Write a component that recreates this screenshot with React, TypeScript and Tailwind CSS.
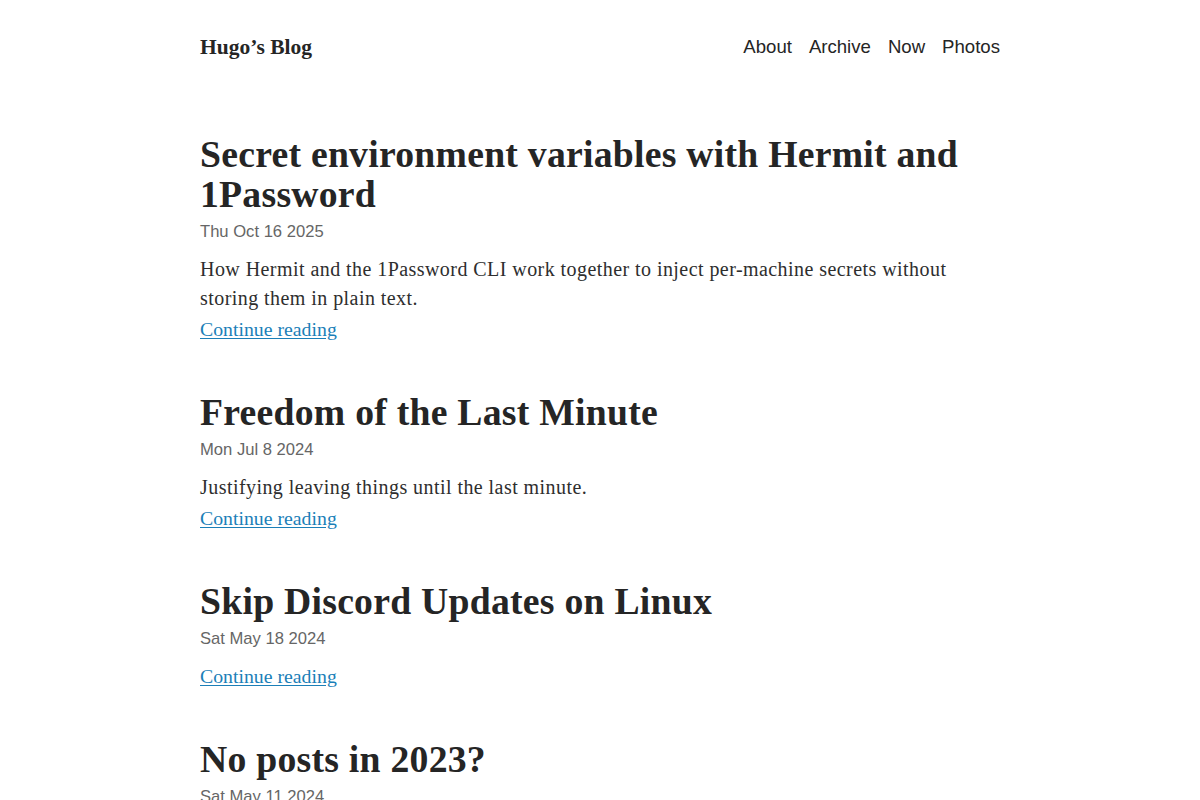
import React from "react";

type Post = {
  title: string;
  date: string;
  summary: string;
};

const posts: Post[] = [
  {
    title: "Secret environment variables with Hermit and 1Password",
    date: "Thu Oct 16 2025",
    summary:
      "How Hermit and the 1Password CLI work together to inject per-machine secrets without storing them in plain text.",
  },
  {
    title: "Freedom of the Last Minute",
    date: "Mon Jul 8 2024",
    summary: "Justifying leaving things until the last minute.",
  },
  {
    title: "Skip Discord Updates on Linux",
    date: "Sat May 18 2024",
    summary: "",
  },
  {
    title: "No posts in 2023?",
    date: "Sat May 11 2024",
    summary: "",
  },
];

const serif = "font-['Liberation_Serif','DejaVu_Serif',serif]";
const sans = "font-['Liberation_Sans','Roboto',sans-serif]";

export default function App() {
  return (
    <div className="min-h-screen bg-white text-[#222]">
      <div className="mx-auto w-[800px] pt-[31px]">
        <header className="flex items-center justify-between h-[32px]">
          <a href="#" className={`${serif} text-[21.5px] font-bold text-[#252525]`}>
            Hugo’s Blog
          </a>
          <nav className={`${sans} flex gap-[17px] text-[18.6px] text-[#252525]`}>
            <a href="#">About</a>
            <a href="#">Archive</a>
            <a href="#">Now</a>
            <a href="#">Photos</a>
          </nav>
        </header>

        <main className="mt-[71px] flex flex-col gap-[48px]">
          {posts.map((post) => (
            <article key={post.title}>
              <h2
                className={`${serif} text-[37.7px] leading-[40px] tracking-[0.25px] font-bold text-[#252525]`}
              >
                {post.title}
              </h2>
              <div className={`${sans} mt-[6px] text-[16.6px] leading-[24px] text-[#666]`}>
                {post.date}
              </div>
              <p
                className={`${serif} mt-[11px] mb-[2px] text-[20px] leading-[29px] tracking-[0.44px] text-[#2e2e2e]`}
              >
                {post.summary}
              </p>
              <a
                href="#"
                className={`${serif} text-[19.8px] leading-[29px] text-[#1b7fb8] underline underline-offset-2`}
              >
                Continue reading
              </a>
            </article>
          ))}
        </main>
      </div>
    </div>
  );
}
